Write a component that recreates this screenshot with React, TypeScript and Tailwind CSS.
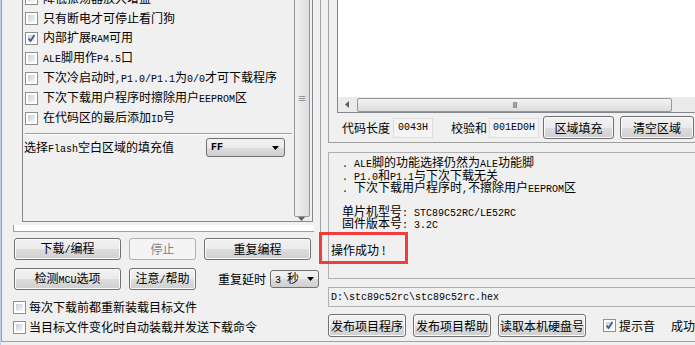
import React from "react";

const MONO = "font-['Liberation_Mono',monospace] text-[10px]";

function T({ s }: { s: string }) {
  const parts = s.split(/([\x00-\x7f]+)/).filter((p) => p.length > 0);
  return (
    <>
      {parts.map((p, i) =>
        /^[\x00-\x7f]+$/.test(p) ? (
          <span key={i} className={MONO}>
            {p}
          </span>
        ) : (
          <span key={i}>{p}</span>
        )
      )}
    </>
  );
}

function CheckBox({ checked = false }: { checked?: boolean }) {
  return (
    <div className="relative w-[13px] h-[13px] border border-[#8e8f8f] bg-white shrink-0">
      <div className="absolute inset-[2px] bg-[linear-gradient(135deg,#cbcfd5,#f6f6f6)]" />
      {checked && (
        <svg className="absolute inset-0" width="11" height="11" viewBox="0 0 11 11">
          <path d="M2.5 5.5 L4.5 8 L8.5 2" fill="none" stroke="#3c5a9a" strokeWidth="1.8" />
        </svg>
      )}
    </div>
  );
}

function Arrow() {
  return (
    <svg width="7" height="4" viewBox="0 0 7 4">
      <path d="M0 0 H7 L3.5 4 Z" fill="#000" />
    </svg>
  );
}

const BTN =
  "flex items-center justify-center rounded-[3px] border border-[#707070] bg-[linear-gradient(#f2f2f2,#ebebeb_50%,#dddddd_50%,#cfcfcf)] shadow-[inset_0_0_0_1px_#fcfcfc] leading-none";

function Btn({ label, cls }: { label: string; cls: string }) {
  return (
    <div className={`${BTN} ${cls}`}>
      <span className="whitespace-pre">
        <T s={label} />
      </span>
    </div>
  );
}

function OptRow({ label, checked = false }: { label: string; checked?: boolean }) {
  return (
    <div className="h-[20px] flex items-center pl-[2px] whitespace-pre">
      <CheckBox checked={checked} />
      <span className="ml-[5px] leading-none">
        <T s={label} />
      </span>
    </div>
  );
}

function MsgLine({ s }: { s: string }) {
  return (
    <div className="h-[12.5px] flex items-center leading-none">
      <span>
        <T s={s} />
      </span>
    </div>
  );
}

export default function App() {
  return (
    <div className="relative w-[695px] h-[345px] overflow-hidden bg-[#f0f0f0] flex font-['Noto_Sans_CJK_SC',sans-serif] text-[12px] text-black">
      <div className="w-[5px] h-full bg-[linear-gradient(90deg,#c6d9ee,#b4cbe6)]" />
      <div className="flex-1 h-[342px] border-b border-[#a0a0a0] flex">
        {/* Left column */}
        <div className="w-[320px] h-full border-l border-[#a0a0a0] flex flex-col">
          <div className="h-[232px] w-[319px] border-r border-[#a0a0a0] flex flex-col">
            {/* list box */}
            <div className="ml-[20px] w-[291px] h-[222px] border-l border-r border-b border-[#828790] flex overflow-hidden">
              <div className="flex-1 flex flex-col">
                <div className="mt-[-12px]">
                  <OptRow label="降低振荡器放大增益" />
                  <OptRow label="只有断电才可停止看门狗" />
                  <OptRow label="内部扩展RAM可用" checked />
                  <OptRow label="ALE脚用作P4.5口" />
                  <OptRow label="下次冷启动时,P1.0/P1.1为0/0才可下载程序" />
                  <OptRow label="下次下载用户程序时擦除用户EEPROM区" />
                  <OptRow label="在代码区的最后添加ID号" />
                </div>
                <div className="mt-[5px] mx-[2px] border-t border-[#a0a0a0] border-b border-b-white" />
                <div className="mt-[3px] h-[19px] flex items-center">
                  <span className="ml-[1px] whitespace-pre leading-none">
                    <T s="选择Flash空白区域的填充值" />
                  </span>
                  <div className="ml-auto mr-[9px] w-[79px] h-[19px] rounded-[3px] border border-[#707070] bg-[linear-gradient(#f2f2f2,#ebebeb_50%,#dddddd_50%,#cfcfcf)] flex items-center px-[4px]">
                    <span className={MONO + " font-bold"}>FF</span>
                    <div className="ml-auto mr-[1px]">
                      <Arrow />
                    </div>
                  </div>
                </div>
              </div>
              {/* vertical scrollbar */}
              <div className="w-[16px] h-full mr-[2px] bg-[#ececec] flex flex-col">
                <div className="mt-[-20px] h-[241px] rounded-[2px] border border-[#979797] bg-[linear-gradient(90deg,#f0f0f0,#dcdcdc)] flex items-center justify-center">
                  <span className="text-[9px] leading-none text-[#555]">≡</span>
                </div>
                <div className="flex-1 flex items-center justify-center">
                  <svg width="7" height="4" viewBox="0 0 7 4">
                    <path d="M0 0 H7 L3.5 4 Z" fill="#606060" />
                  </svg>
                </div>
              </div>
            </div>
            <div className="mt-[3px] ml-[11px] w-[301px] h-[7px] bg-white border-l border-b border-[#a0a0a0]" />
          </div>
          {/* button row 1 */}
          <div className="mt-[6px] ml-[12px] flex gap-[8px] h-[22px]">
            <Btn label="下载/编程" cls="w-[107px]" />
            <div className="w-[67px] flex items-center justify-center rounded-[3px] border border-[#adb2b5] bg-[#f4f4f4] text-[#838383] leading-none">
              停止
            </div>
            <Btn label="重复编程" cls="w-[107px]" />
          </div>
          {/* button row 2 */}
          <div className="mt-[8px] ml-[12px] flex items-center h-[22px]">
            <Btn label="检测MCU选项" cls="w-[107px] h-[22px]" />
            <Btn label="注意/帮助" cls="ml-[8px] w-[67px] h-[22px]" />
            <span className="ml-[22px] leading-none">重复延时</span>
            <div className="ml-[4px] w-[49px] h-[18px] rounded-[3px] border border-[#707070] bg-[linear-gradient(#f2f2f2,#ebebeb_50%,#dddddd_50%,#cfcfcf)] flex items-center px-[4px] whitespace-pre">
              <span className="leading-none">
                <T s="3 " />秒
              </span>
              <div className="ml-auto">
                <Arrow />
              </div>
            </div>
          </div>
          {/* check rows */}
          <div className="mt-[7px] ml-[11px] flex flex-col">
            <div className="h-[20px] flex items-center">
              <CheckBox />
              <span className="ml-[3px] leading-none">每次下载前都重新装载目标文件</span>
            </div>
            <div className="h-[20px] flex items-center">
              <CheckBox />
              <span className="ml-[3px] leading-none">当目标文件变化时自动装载并发送下载命令</span>
            </div>
          </div>
        </div>

        {/* Right column */}
        <div className="flex-1 h-full pl-[7px] flex flex-col">
          {/* group box */}
          <div className="h-[143px] border-l border-b border-[#a0a0a0] pl-[8px] flex flex-col">
            <div className="h-[113px] border-l border-b border-[#828790] flex flex-col">
              <div className="flex-1 bg-white" />
              <div className="h-[15px] bg-[#ebebeb] flex items-center">
                <div className="w-[19px] flex items-center justify-center">
                  <svg width="4" height="7" viewBox="0 0 4 7">
                    <path d="M4 0 V7 L0 3.5 Z" fill="#606060" />
                  </svg>
                </div>
                <div className="w-[315px] h-[14px] rounded-[2px] border border-[#979797] bg-[linear-gradient(#f4f4f4,#dcdcdc)] flex items-center justify-center">
                  <span className="text-[8px] leading-none tracking-[-1px] text-[#555]">III</span>
                </div>
              </div>
            </div>
            <div className="mt-[3px] h-[23px] flex items-center whitespace-pre">
              <span className="ml-[5px] leading-none">代码长度</span>
              <div className="ml-[3px] w-[40px] h-[20px] border border-[#dcdcdc] bg-[#f4f4f4] flex items-center justify-center">
                <span className={MONO}>0043H</span>
              </div>
              <span className="ml-[18px] leading-none">校验和</span>
              <div className="ml-[2px] w-[50px] h-[20px] border border-[#dcdcdc] bg-[#f4f4f4] flex items-center justify-center">
                <span className={MONO}>001ED0H</span>
              </div>
              <Btn label="区域填充" cls="ml-[4px] w-[71px] h-[23px]" />
              <Btn label="清空区域" cls="ml-[6px] w-[74px] h-[23px] shrink-0" />
            </div>
          </div>
          {/* message box */}
          <div className="mt-[9px] h-[127px] border border-r-0 border-[#b0b0b0] bg-[#f0f0f0] whitespace-pre">
            <div className="pt-[4px] pl-[13px]">
              <MsgLine s=". ALE脚的功能选择仍然为ALE功能脚" />
              <MsgLine s=". P1.0和P1.1与下次下载无关" />
              <MsgLine s=". 下次下载用户程序时,不擦除用户EEPROM区" />
              <div className="h-[11px]" />
              <MsgLine s="单片机型号: STC89C52RC/LE52RC" />
              <MsgLine s="固件版本号: 3.2C" />
            </div>
            <div className="mt-[12px] h-[14px] pl-[2px] flex items-center leading-none">操作成功 !</div>
          </div>
          {/* path box */}
          <div className="mt-[8px] h-[20px] border border-r-0 border-[#b0b0b0] bg-[#f0f0f0] flex items-center pl-[2px]">
            <span className={MONO}>{"D:\\stc89c52rc\\stc89c52rc.hex"}</span>
          </div>
          {/* bottom buttons */}
          <div className="mt-[7px] h-[23px] flex items-center whitespace-pre">
            <Btn label="发布项目程序" cls="w-[78px] h-[23px]" />
            <Btn label="发布项目帮助" cls="ml-[7px] w-[78px] h-[23px]" />
            <Btn label="读取本机硬盘号" cls="ml-[7px] w-[88px] h-[23px]" />
            <div className="ml-[17px]">
              <CheckBox checked />
            </div>
            <span className="ml-[3px] leading-none">提示音</span>
            <span className="ml-[16px] leading-none">成功</span>
          </div>
        </div>
      </div>
      {/* red highlight */}
      <div className="absolute left-[319px] top-[232px] w-[89px] h-[32px] border-[3px] border-[#f03c3c]" />
    </div>
  );
}
